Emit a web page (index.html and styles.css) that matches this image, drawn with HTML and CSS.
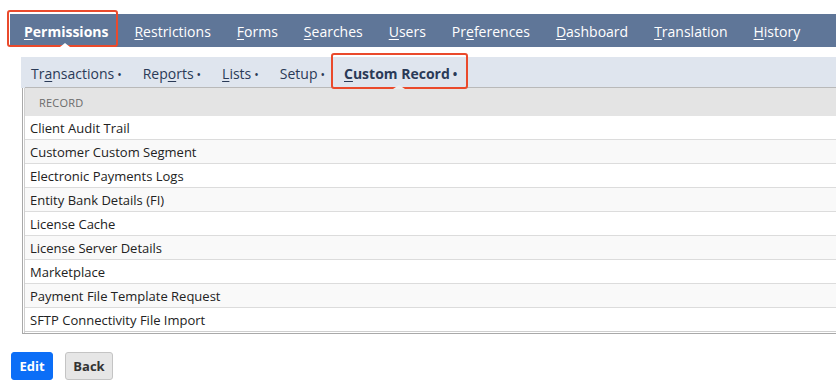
FILE: index.html
```html
<!DOCTYPE html>
<html>
<head>
<meta charset="utf-8">
<link rel="stylesheet" href="styles.css">
</head>
<body>
<div class="page">
  <nav class="tabs">
    <a class="tab active"><u>P</u>ermissions</a>
    <a class="tab"><u>R</u>estrictions</a>
    <a class="tab"><u>F</u>orms</a>
    <a class="tab"><u>S</u>earches</a>
    <a class="tab"><u>U</u>sers</a>
    <a class="tab">Pr<u>e</u>ferences</a>
    <a class="tab"><u>D</u>ashboard</a>
    <a class="tab"><u>T</u>ranslation</a>
    <a class="tab"><u>H</u>istory</a>
  </nav>
  <nav class="subtabs">
    <a class="subtab">Tr<u>a</u>nsactions<span class="dot">•</span></a>
    <a class="subtab">Rep<u>o</u>rts<span class="dot">•</span></a>
    <a class="subtab"><u>L</u>ists<span class="dot">•</span></a>
    <a class="subtab">Setup<span class="dot">•</span></a>
    <a class="subtab active"><u>C</u>ustom Record<span class="dot">•</span></a>
  </nav>
  <div class="table">
    <div class="thead">RECORD</div>
    <div class="row">Client Audit Trail</div>
    <div class="row">Customer Custom Segment</div>
    <div class="row">Electronic Payments Logs</div>
    <div class="row">Entity Bank Details (FI)</div>
    <div class="row">License Cache</div>
    <div class="row">License Server Details</div>
    <div class="row">Marketplace</div>
    <div class="row">Payment File Template Request</div>
    <div class="row">SFTP Connectivity File Import</div>
  </div>
  <div class="actions">
    <button class="btn primary">Edit</button>
    <button class="btn secondary">Back</button>
  </div>
</div>
</body>
</html>
```
FILE: styles.css
```css
html, body {
  margin: 0;
  padding: 0;
  background: #ffffff;
  overflow: hidden;
}
body {
  font-family: "Open Sans", "Liberation Sans", sans-serif;
  width: 836px;
  height: 389px;
}
u {
  text-decoration: underline;
  text-underline-offset: 2px;
  text-decoration-thickness: 1px;
}
.page {
  display: flex;
  flex-direction: column;
}
.tabs {
  display: flex;
  align-items: center;
  height: 33px;
  margin: 14px 0 0 10px;
  padding-left: 1px;
  background: #5f7698;
}
.tab {
  position: relative;
  padding: 2px 13px 0;
  font-size: 14px;
  line-height: 31px;
  color: #ffffff;
  white-space: nowrap;
}
.tab.active {
  font-weight: 700;
}
.tab.active::before {
  content: "";
  position: absolute;
  left: -4px;
  right: 3px;
  top: -4px;
  bottom: 0;
  border: 2px solid #ea4a2c;
  border-radius: 3px;
}
.tab.active::after {
  content: "";
  position: absolute;
  left: 50%;
  bottom: 0;
  margin-left: -6px;
  border-left: 5px solid transparent;
  border-right: 5px solid transparent;
  border-bottom: 4px solid #ffffff;
}
.subtabs {
  display: flex;
  align-items: center;
  height: 31px;
  margin: 10px 0 0 21px;
  background: #dfe5ee;
}
.subtab {
  position: relative;
  padding: 2px 11px 0 10px;
  font-size: 14px;
  line-height: 29px;
  color: #2a3a57;
  white-space: nowrap;
}
.subtab .dot {
  font-size: 12px;
  margin-left: 3px;
}
.subtab.active {
  font-weight: 700;
  margin-left: -5px;
  padding: 2px 11px 0 13px;
}
.subtab.active::before {
  content: "";
  position: absolute;
  left: 0;
  right: 0;
  top: -4px;
  bottom: 0;
  border: 2px solid #ea4a2c;
  border-radius: 3px;
}
.subtab.active::after {
  content: "";
  position: absolute;
  left: 50%;
  bottom: 0;
  margin-left: -7px;
  border-left: 6px solid transparent;
  border-right: 6px solid transparent;
  border-bottom: 4px solid #ececec;
}
.table {
  margin-left: 22px;
  border-left: 1px solid #a9a9a9;
  border-bottom: 1px solid #a9a9a9;
  box-shadow: inset 1px 0 0 #ffffff, inset 2px 0 0 #cfcfcf, inset 0 -1px 0 #ffffff, inset 0 -2px 0 #cfcfcf;
  padding: 0 0 2px 2px;
  display: flex;
  flex-direction: column;
}
.thead {
  height: 28px;
  line-height: 29px;
  background: #e4e4e4;
  border-top: 1px solid #b9b9b9;
  margin-top: -1px;
  padding-left: 14px;
  font-size: 11px;
  color: #6b6b6b;
  letter-spacing: 0.2px;
}
.row {
  height: 23px;
  line-height: 25px;
  overflow: hidden;
  border-bottom: 1px solid #dcdcdc;
  padding-left: 5px;
  font-size: 13px;
  color: #222222;
  background: #ffffff;
}
.row:nth-of-type(odd) {
  background: #f9f9f9;
}
.row:last-child {
  border-bottom: none;
}
.actions {
  display: flex;
  gap: 12px;
  margin: 18px 0 0 11px;
}
.btn {
  font-family: "Open Sans", "Liberation Sans", sans-serif;
  font-size: 13px;
  font-weight: 700;
  height: 28px;
  border-radius: 3px;
  padding: 0;
  cursor: pointer;
}
.btn.primary {
  width: 42px;
  background: #0b6ef7;
  color: #ffffff;
  border: 1px solid #0b6ef7;
}
.btn.secondary {
  width: 48px;
  background: #e6e6e6;
  color: #333333;
  border: 1px solid #c4c4c4;
}
```
